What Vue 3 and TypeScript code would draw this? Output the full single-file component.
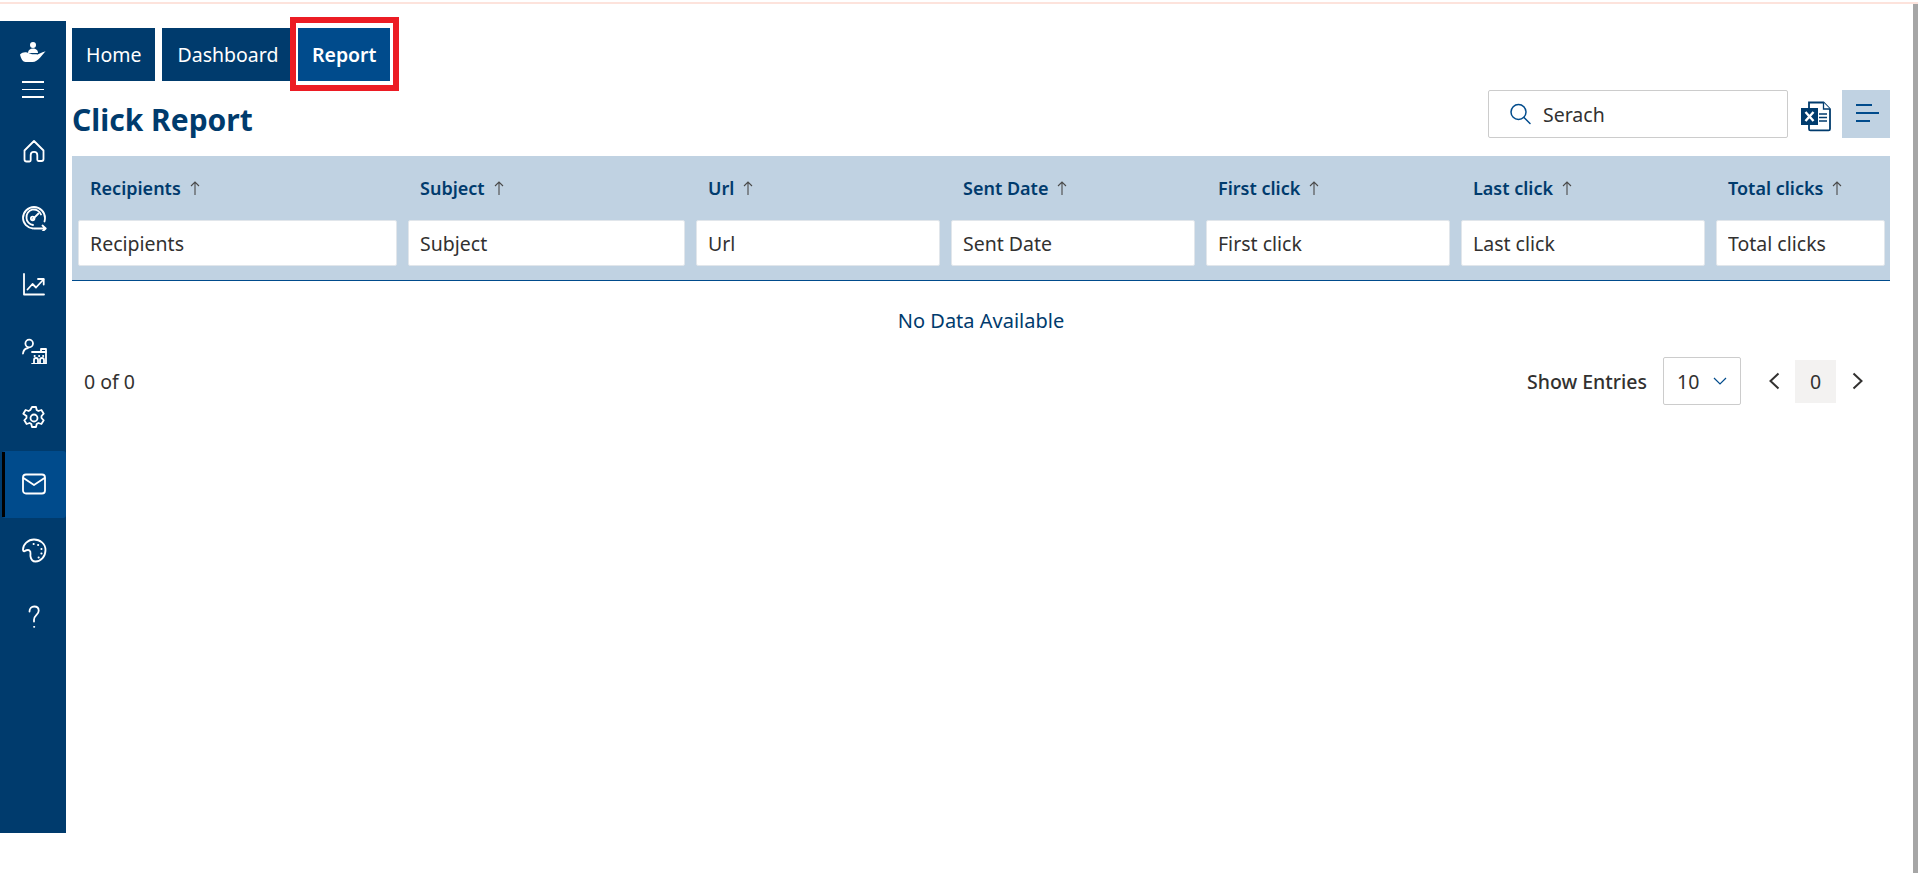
<template>
  <div class="page">
    <div class="top-line"></div>
    <div class="shell">
      <aside class="sidebar">
        <div class="brand">
          <svg width="26" height="20" viewBox="0 0 26 20"><circle cx="13" cy="3" r="3" fill="#fff" /><path d="M8 11c0-3 2.200-4.600 5-4.600s5 1.600 5 4.600z" fill="#fff" /><path d="M0 12.500c2-2 4.500-2.600 7-2l5 1.800h4.500c.9 0 1.200 1.200.3 1.500l-4.300.9 9.500-4.200c1.500-.6 3.500-1.300 3.500-1.300l-5.500 6.500C17.500 18 15.500 20 12.500 20H5.500c-2.500 0-4.500-3-5.500-7.500z" fill="#fff" /></svg>
        </div>
        <button class="burger" aria-label="Menu"><span></span><span></span><span></span></button>
        <nav class="nav">
          <a v-for="item in navItems" :key="item.name" class="nav-item" :class="{ active: item.name === 'mail' }">
            <svg width="26" height="26" viewBox="0 0 26 26" fill="none" stroke="#fff" stroke-width="1.800" stroke-linecap="round" stroke-linejoin="round">
              <path v-for="(d, i) in item.paths" :key="i" :d="d" />
            </svg>
          </a>
        </nav>
      </aside>

      <main class="content">
        <div class="tabs">
          <a class="tab">Home</a>
          <a class="tab">Dashboard</a>
          <span class="tab-mark"><a class="tab current">Report</a></span>
        </div>

        <div class="title-row">
          <h1>Click Report</h1>
          <div class="tools">
            <label class="search">
              <svg width="22" height="22" viewBox="0 0 22 22" fill="none" stroke="#004b8c" stroke-width="1.500" stroke-linecap="round"><circle cx="9.500" cy="9" r="7.500" /><path d="M15 14.500l6 6" /></svg>
              <input placeholder="Serach" />
            </label>
            <svg class="excel" width="32" height="32" viewBox="0 0 32 32">
              <path d="M9 2.500h14.500l6.500 6.500v20c0 .8-.6 1.400-1.400 1.400H10.400C9.600 30.400 9 29.800 9 29z" fill="#fff" stroke="#003b6d" stroke-width="1.800" />
              <path d="M23.500 2.500V9H30" fill="#fff" stroke="#003b6d" stroke-width="1.300" />
              <path d="M19 14h8M19 17.500h8M19 21h8" stroke="#003b6d" stroke-width="1.500" />
              <rect x="1" y="8" width="17" height="17" fill="#003b6d" />
              <path d="M5.500 12l8 9M13.500 12l-8 9" stroke="#fff" stroke-width="2.400" />
            </svg>
            <button class="filter" aria-label="Columns">
              <span class="l1"></span><span class="l2"></span><span class="l3"></span>
            </button>
          </div>
        </div>

        <div class="table-head">
          <div v-for="col in columns" :key="col" class="col">
            <div class="col-title">
              <span>{{ col }}</span>
              <svg width="10" height="14" viewBox="0 0 10 14" fill="none" stroke="#4a4a4a" stroke-width="1.100"><path d="M5 14V1M1 5l4-4 4 4" /></svg>
            </div>
            <input class="col-filter" :placeholder="col" />
          </div>
        </div>

        <div class="empty">No Data Available</div>

        <div class="footer">
          <span class="count">0 of 0</span>
          <div class="pager">
            <span class="entries-label">Show Entries</span>
            <div class="entries">
              <span>10</span>
              <svg width="14" height="8" viewBox="0 0 14 8" fill="none" stroke="#004b8c" stroke-width="1.200"><path d="M1 1l6 6 6-6" /></svg>
            </div>
            <svg class="chev" width="12" height="18" viewBox="0 0 12 18" fill="none" stroke="#323130" stroke-width="2"><path d="M10.500 1.500L2.500 9l8 7.500" /></svg>
            <span class="page-no">0</span>
            <svg class="chev" width="12" height="18" viewBox="0 0 12 18" fill="none" stroke="#323130" stroke-width="2"><path d="M1.500 1.500l8 7.500-8 7.500" /></svg>
          </div>
        </div>
      </main>
    </div>
    <div class="scrollbar"></div>
  </div>
</template>

<script setup lang="ts">
const columns: string[] = ['Recipients', 'Subject', 'Url', 'Sent Date', 'First click', 'Last click', 'Total clicks'];

const navItems: { name: string; paths: string[] }[] = [
  { name: 'home', paths: ['M3.500 12.500L13 3l9.500 9.500v8.500c0 1.300-.8 2-2 2h-3c-.8 0-1.200-.5-1.200-1.200V17c0-2-1.300-3.200-3.300-3.200s-3.300 1.200-3.300 3.200v5.300c0 .7-.4 1.200-1.200 1.200h-3c-1.200 0-2-.7-2-2z'] },
  { name: 'gauge', paths: ['M12 23.500C6.500 23 2 18.500 2 13 2 7 7 2 13 2s11 5 11 11c0 1.200-.2 2.400-.5 3.500', 'M12 20c-3.500-.5-6.500-3.500-6.500-7A7.500 7.500 0 0 1 20 9.500', 'M11.800 14.200L17.500 8.500', 'M13 23.500h11.500M21.500 20.500l3.200 3-3.200 3', 'M13.500 13.500a1.800 1.800 0 1 1-3.600 0 1.800 1.800 0 0 1 3.600 0z'] },
  { name: 'chart', paths: ['M3 3v20.500h20', 'M6.500 18.500l5-5.500 3.500 3.500 7.500-8', 'M17 8h5.700v5.500'] },
  { name: 'people', paths: ['M12 5.500a3.800 3.800 0 1 1-7.600 0 3.800 3.800 0 0 1 7.600 0z', 'M2 15.500c.3-3 2.200-5 5-5.500', 'M11 14h14v12H11', 'M13 26v-4a2 2 0 0 1 4 0v4M19 26v-4a2 2 0 0 1 4 0v4', 'M20 14v-3h5v3', 'M13.500 18h.3M18 18h.3M22 18h.3'] },
  { name: 'gear', paths: ['M16.500 13a3.500 3.500 0 1 1-7 0 3.500 3.500 0 0 1 7 0z', 'M11 2h4l.7 3 1.700 1 3-1 2.300 3.700-2.200 2.300v2l2.200 2.300-2.300 3.700-3-1-1.700 1-.7 3h-4l-.7-3-1.700-1-3 1-2.300-3.700 2.200-2.300v-2L2.300 8.700 4.600 5l3 1 1.700-1z'] },
  { name: 'mail', paths: ['M5 3.500h16c1.800 0 3 1.200 3 3v13c0 1.800-1.200 3-3 3H5c-1.800 0-3-1.200-3-3v-13c0-1.800 1.200-3 3-3z', 'M2.500 7L13 14 23.500 7'] },
  { name: 'palette', paths: ['M13 1.500C7 1.500 2 6.500 2 11.500c0 1.500.7 2 1.500 1.600 1.500-.8 3.500-1.800 5-.6 2 1.500.5 3.500 1 6 .5 3 2.500 5 5 5 5.500 0 10-5 10-11.500S19 1.500 13 1.500z', 'M12.500 6h.3M17 7h.3M20.300 11h.3M20.300 15.500h.3M17.500 19.500h.3'] },
  { name: 'help', paths: ['M8.500 7.500c0-3 2-5 4.700-5s4.500 1.800 4.500 4.200c0 4-4.700 4.300-4.700 9v1.800', 'M13 22.800h.3'] },
];
</script>

<style>
html, body {
  background: #fff;
  overflow: hidden;
}
</style>

<style scoped>
.page {
  position: relative;
  height: 877px;
  width: 1918px;
  font-family: "Noto Sans", "Open Sans", sans-serif;
  color: #323130;
  overflow: hidden;
}

.top-line {
  height: 2px;
  margin: 2px 0 17px;
  background: #fde3dc;
}

.shell {
  display: flex;
  align-items: flex-start;
}

.sidebar {
  width: 66px;
  height: 812px;
  background: #003b6d;
  flex: none;
  display: flex;
  flex-direction: column;
}

.brand {
  height: 20px;
  margin-top: 21px;
  display: flex;
  justify-content: center;
  align-items: center;
}

.burger {
  display: flex;
  flex-direction: column;
  gap: 6px;
  align-items: center;
  background: none;
  border: 0;
  padding: 0;
  margin-top: 19px;
  height: 16px;
}

.burger span {
  width: 22px;
  height: 1.500px;
  background: #fff;
  flex: none;
}

.nav {
  display: flex;
  flex-direction: column;
  margin-top: 21px;
}

.nav-item {
  height: 66.600px;
  display: flex;
  align-items: center;
  justify-content: center;
  position: relative;
  margin-left: 2px;
  border-radius: 3px;
}

.nav-item.active {
  background: #004b8c;
}

.nav-item.active::before {
  content: "";
  position: absolute;
  left: 0;
  top: 1px;
  bottom: 1px;
  width: 3px;
  background: #000;
}

.content {
  flex: 1;
  padding: 7px 28px 0 6px;
  min-width: 0;
}

.tabs {
  display: flex;
  align-items: center;
  gap: 6px;
  height: 53px;
}

.tab {
  height: 53px;
  padding: 0 14px;
  display: flex;
  align-items: center;
  background: #003b6d;
  color: #fff;
  font-size: 19.500px;
  box-sizing: border-box;
}

.tab:first-child {
  margin-right: 1px;
}

.tab:nth-child(2) {
  padding-left: 15px;
}

.tab-mark {
  position: relative;
  display: flex;
}

.tab-mark::after {
  content: "";
  position: absolute;
  inset: -11px -8px -10px -8px;
  border: 6px solid #ec1c24;
}

.tab.current {
  background: #004b8c;
  font-weight: 600;
  padding: 0 13.500px;
  box-shadow: 0 0 0 2px #fff;
}

.title-row {
  display: flex;
  justify-content: space-between;
  align-items: flex-start;
  margin-top: 9px;
  height: 66px;
}

h1 {
  margin: 8px 0 0;
  font-size: 30px;
  line-height: 44px;
  font-weight: 700;
  color: #003b6d;
}

.tools {
  display: flex;
  align-items: flex-start;
  height: 48px;
}

.search {
  width: 300px;
  height: 48px;
  box-sizing: border-box;
  border: 1px solid #ccc;
  border-radius: 2px;
  display: flex;
  align-items: center;
  gap: 12px;
  padding-left: 20px;
}

.search input {
  border: 0;
  outline: 0;
  flex: 1;
  min-width: 0;
  padding: 0;
  font: inherit;
  font-size: 19.500px;
  background: none;
}

.search input::placeholder,
.col-filter::placeholder {
  color: #323130;
  opacity: 1;
}

.excel {
  margin: 10px 10px 0 12px;
}

.filter {
  width: 48px;
  height: 48px;
  background: #c0d2e2;
  border: 0;
  padding: 14px 0 0 14px;
  box-sizing: border-box;
  display: flex;
  flex-direction: column;
  align-items: flex-start;
  gap: 6.500px;
}

.filter span {
  height: 1.500px;
  background: #004b8c;
  flex: none;
}

.l1 { width: 16px; }
.l2 { width: 23px; }
.l3 { width: 14px; }

.table-head {
  display: grid;
  grid-template-columns: 330px 288px 255px 255px 255px 255px 180px;
  height: 125px;
  box-sizing: border-box;
  background: #c0d2e2;
  border-bottom: 1px solid #004b8c;
}

.col {
  padding: 0 5px 0 6px;
  min-width: 0;
}

.col-title {
  height: 64px;
  padding: 0 12px;
  box-sizing: border-box;
  display: flex;
  align-items: center;
  gap: 9px;
  font-size: 18px;
  font-weight: 600;
  color: #003b6d;
  white-space: nowrap;
}

.col-filter {
  display: block;
  width: 100%;
  height: 46px;
  box-sizing: border-box;
  border: 1px solid #e1e6eb;
  border-radius: 2px;
  padding: 0 11px;
  background: #fff;
  font: inherit;
  font-size: 19.500px;
  outline: 0;
}

.empty {
  text-align: center;
  color: #003b6d;
  font-size: 20px;
  line-height: 26px;
  margin-top: 27px;
}

.footer {
  display: flex;
  justify-content: space-between;
  align-items: center;
  margin-top: 23px;
  height: 48px;
}

.count {
  margin-left: 12px;
  font-size: 19.500px;
}

.pager {
  display: flex;
  align-items: center;
  margin-right: 26px;
}

.entries-label {
  font-size: 19.500px;
  font-weight: 500;
  margin-right: 16px;
  white-space: nowrap;
}

.entries {
  width: 78px;
  height: 48px;
  box-sizing: border-box;
  border: 1px solid #ccc;
  border-radius: 2px;
  display: flex;
  align-items: center;
  gap: 14px;
  padding-left: 13px;
  font-size: 19.500px;
  margin-right: 27px;
}

.page-no {
  width: 41px;
  height: 43px;
  background: #f3f2f1;
  display: flex;
  align-items: center;
  justify-content: center;
  font-size: 19.500px;
  margin: 0 16px 0 15px;
}

.scrollbar {
  position: absolute;
  right: 0;
  top: 4px;
  bottom: 4px;
  width: 5px;
  background: #a6a6a6;
}
</style>
